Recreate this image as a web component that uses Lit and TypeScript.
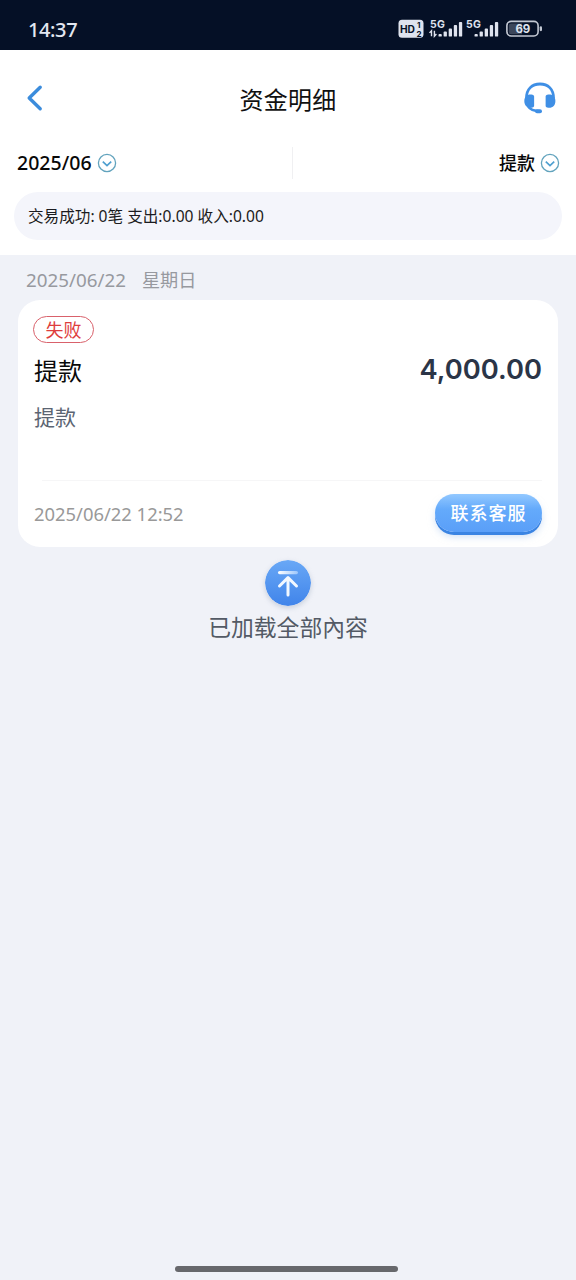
import { LitElement, html, css, svg } from "lit";
import { customElement } from "lit/decorators.js";

const chevronCircle = html`<svg width="20" height="20" viewBox="0 0 20 20" fill="none">
  <circle cx="10" cy="10" r="8.6" stroke="#62a3bd" stroke-width="1.3" />
  <path d="M5.8 8.6 10 12.5 14.2 8.6" stroke="#4e9fd0" stroke-width="1.7" />
</svg>`;

const barHeights = [2.6, 5, 8, 11.5, 14.6];

const signalBars = (from: number) =>
  svg`${barHeights.map(
    (h, i) => svg`<rect x=${from + i * 5.1} y=${18.6 - h} width="3.3" height=${h} rx="0.9" fill="#dfe3ee" />`
  )}`;

@customElement("status-bar")
export class StatusBar extends LitElement {
  static styles = css`
    :host {
      display: flex;
      justify-content: space-between;
      height: 50px;
      box-sizing: border-box;
      padding: 18px 30px 0 28px;
      background: #051026;
      color: #e3e7f0;
      font-family: "Noto Sans", sans-serif;
    }
    .time {
      font-size: 20px;
      font-weight: 500;
      line-height: 23px;
      letter-spacing: -0.4px;
    }
    svg {
      display: block;
    }
    text {
      font-family: Inter, sans-serif;
      font-weight: 700;
    }
  `;
  render() {
    return html`<span class="time">14:37</span>
      <svg width="148" height="24" viewBox="0 0 148 24">
        <rect x="0.5" y="1.8" width="25" height="18" rx="3.5" fill="#dfe3ee" />
        <text x="2" y="14.900" font-size="10.500" fill="#051026" textLength="15" lengthAdjust="spacingAndGlyphs">HD</text>
        <text x="19" y="10" font-size="8" fill="#051026">1</text>
        <text x="18.600" y="18.600" font-size="8" fill="#051026">2</text>
        <text x="32" y="9.6" font-size="10.5" fill="#dfe3ee" textLength="15">5G</text>
        <path d="M33.5 18.2v-5.5l-2 2.2M36.4 12.7v5.5l2-2.2" stroke="#dfe3ee" stroke-width="1.4" fill="none" />
        ${signalBars(40.5)}
        <text x="68" y="9.6" font-size="10.5" fill="#dfe3ee" textLength="15">5G</text>
        ${signalBars(76.5)}
        <rect x="108.9" y="3.4" width="31.2" height="14.6" rx="4.2" stroke="#c3c8d3" stroke-width="1.6" fill="none" />
        <path d="M113 5.4h11v10.8h-11a2.2 2.2 0 0 1-2.2-2.2V7.6a2.2 2.2 0 0 1 2.2-2.2z" fill="#3c465a" />
        <rect x="141.7" y="8.2" width="2.3" height="5" rx="1.1" fill="#c3c8d3" />
        <text x="117.6" y="15" font-size="11.5" fill="#dfe3ee" textLength="14.5">69</text>
      </svg>`;
  }
}

@customElement("app-root")
export class AppRoot extends LitElement {
  static styles = css`
    :host {
      display: flex;
      flex-direction: column;
      height: 1280px;
      background: #f0f2f8;
      color: #111;
      font-family: "Noto Sans", "Noto Sans CJK SC", sans-serif;
      white-space: nowrap;
    }
    svg {
      display: block;
      flex: none;
    }
    .head {
      height: 204.5px;
      background: #fff;
    }
    .nav {
      display: grid;
      grid-template-columns: 40px 1fr 40px;
      align-items: center;
      height: 96px;
      padding: 0 16px;
    }
    .nav h1 {
      margin: 0;
      padding-top: 3px;
      text-align: center;
      font-size: 24px;
      font-weight: 400;
      line-height: 34px;
      letter-spacing: 0.2px;
    }
    .filters {
      display: grid;
      grid-template-columns: 275px 1px 1fr;
      align-items: center;
      height: 34px;
      padding: 0 16px 0 17px;
      font-weight: 500;
      color: #080808;
    }
    .filter {
      display: flex;
      align-items: center;
      gap: 5px;
      font-size: 18px;
      line-height: 26px;
    }
    .month {
      font-size: 19.5px;
      letter-spacing: 0.02px;
    }
    .right {
      justify-content: flex-end;
    }
    .rule {
      height: 32px;
      background: #f0f0f2;
    }
    .summary {
      height: 48px;
      box-sizing: border-box;
      margin: 12px 14px 0;
      padding: 1px 0 0 14px;
      border-radius: 24px;
      background: #f4f5fb;
      font-size: 15.6px;
      line-height: 47px;
      color: #1b1b20;
    }
    .date {
      display: flex;
      gap: 16px;
      padding: 11.5px 26px 0;
      height: 34px;
      font-size: 18.8px;
      line-height: 28px;
      color: #97999f;
    }
    .weekday {
      font-size: 18.2px;
    }
    .card {
      display: flex;
      flex-direction: column;
      height: 247px;
      box-sizing: border-box;
      margin: 0 18px;
      padding: 16px 16px 0;
      border-radius: 22px;
      background: #fff;
    }
    .tag {
      align-self: flex-start;
      width: 61px;
      height: 27px;
      box-sizing: border-box;
      margin-left: -1px;
      border: 1.5px solid #d9616b;
      border-radius: 14px;
      text-align: center;
      font-size: 18px;
      line-height: 26px;
      color: #de3d3d;
    }
    .title {
      display: flex;
      justify-content: space-between;
      align-items: center;
      height: 50px;
      padding-top: 2px;
      box-sizing: border-box;
      font-size: 24px;
      color: #0a0a0a;
    }
    .amount {
      padding-top: 2px;
      font-family: Inter, sans-serif;
      font-size: 27.3px;
      font-weight: 600;
      line-height: 34px;
      color: #2b3547;
    }
    .note {
      height: 87px;
      font-size: 21px;
      line-height: 49px;
      color: #5b6472;
    }
    .line {
      height: 1px;
      margin-left: 8px;
      background: #f6f6f7;
    }
    .foot {
      display: flex;
      justify-content: space-between;
      align-items: flex-start;
      height: 66px;
      font-size: 18.4px;
      color: #999;
    }
    .stamp {
      padding-top: 19px;
      line-height: 27px;
    }
    .service {
      width: 107px;
      height: 38px;
      margin-top: 13px;
      border-radius: 19px;
      background: linear-gradient(#92c8ff, #64aafb 40%, #5a9ff8);
      box-shadow: 0 3px 0 #3a84e3, 0 5px 7px #a9c7ee88;
      text-align: center;
      font-size: 18px;
      font-weight: 500;
      line-height: 39px;
      letter-spacing: 1px;
      color: #fff;
    }
    .end {
      display: flex;
      flex-direction: column;
      align-items: center;
      gap: 4px;
      padding-top: 12.5px;
      font-size: 22.8px;
      line-height: 36px;
      color: #535a65;
    }
    .up {
      border-radius: 50%;
      box-shadow: 0 2px 5px #8d9bb466;
    }
    .home {
      width: 223px;
      height: 6px;
      margin: auto 0 8.5px 174.500px;
      border-radius: 3px;
      background: #67686c;
    }
  `;

  render() {
    return html`
      <status-bar></status-bar>
      <div class="head">
        <div class="nav">
          <svg width="40" height="40" viewBox="0 0 40 40" fill="none">
            <path d="M24.2 9.3 13.2 20 24.2 30.7" stroke="#3b8cdc" stroke-width="3.4" stroke-linecap="round" stroke-linejoin="round" />
          </svg>
          <h1>资金明细</h1>
          <svg width="40" height="40" viewBox="0 0 40 40" fill="none">
            <path d="M6.500 20C6.500 11 12 6 20 6S33.500 11 33.500 20" stroke="#3f8fe5" stroke-width="2.800" />
            <path d="M12.500 16.800c-4.500-1.200-8.200 1.500-8.200 6.200s3.200 7.600 8.200 6.600c1.200-.3 1.600-1 1.600-2V18.800c0-1-.5-1.700-1.600-2z" fill="#3f8fe5" />
            <path d="M27.200 16.800c4.500-1.200 8.200 1.500 8.200 6.200s-3.200 7.600-8.200 6.600c-1.200-.3-1.600-1-1.600-2V18.800c0-1 .5-1.700 1.600-2z" fill="#3f8fe5" />
            <path d="M7.800 28C10 31.600 13.500 33.100 19.800 33.100" stroke="#3f8fe5" stroke-width="2.400" />
            <rect x="15" y="31.200" width="7" height="4" rx="2" fill="#3f8fe5" />
          </svg>
        </div>
        <div class="filters">
          <div class="filter"><span class="month">2025/06</span>${chevronCircle}</div>
          <div class="rule"></div>
          <div class="filter right"><span>提款</span>${chevronCircle}</div>
        </div>
        <div class="summary">交易成功: 0笔 支出:0.00 收入:0.00</div>
      </div>
      <div class="date"><span>2025/06/22</span><span class="weekday">星期日</span></div>
      <div class="card">
        <div class="tag">失败</div>
        <div class="title"><span>提款</span><span class="amount">4,000.00</span></div>
        <div class="note">提款</div>
        <div class="line"></div>
        <div class="foot">
          <span class="stamp">2025/06/22 12:52</span>
          <div class="service">联系客服</div>
        </div>
      </div>
      <div class="end">
        <svg class="up" width="46" height="46" viewBox="0 0 46 46" fill="none">
          <defs>
            <linearGradient id="disc" x1="0" y1="0" x2="0" y2="1">
              <stop offset="0" stop-color="#69a8f6" />
              <stop offset="1" stop-color="#4084ea" />
            </linearGradient>
            <linearGradient id="bar" x1="0" y1="0" x2="1" y2="0">
              <stop offset="0" stop-color="#fff" />
              <stop offset="1" stop-color="#9cc6fb" />
            </linearGradient>
          </defs>
          <circle cx="23" cy="23" r="23" fill="url(#disc)" />
          <rect x="13" y="11" width="20" height="3.200" rx="1.600" fill="url(#bar)" />
          <path d="M23 35V18M14.500 26 23 17.600 31.500 26" stroke="#f2f8ff" stroke-width="3" stroke-linecap="round" stroke-linejoin="round" />
        </svg>
        <span>已加载全部內容</span>
      </div>
      <div class="home"></div>
    `;
  }
}
